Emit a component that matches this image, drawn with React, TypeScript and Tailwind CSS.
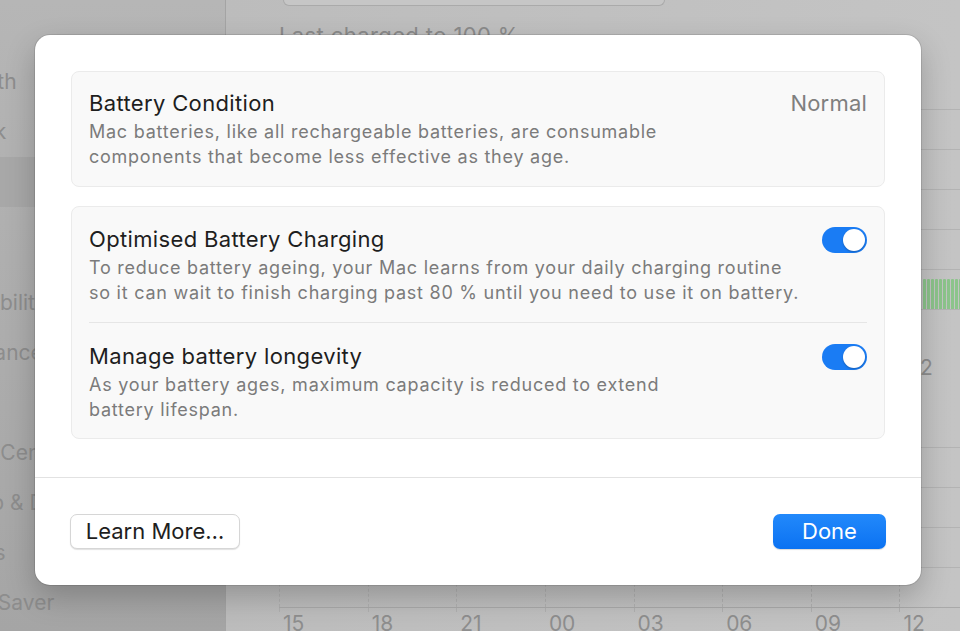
const sidebarItems = [
  { label: "Bluetooth", h: 50 },
  { label: "Network", h: 50 },
  { label: "Battery", h: 50, selected: true },
  { label: "", h: 21 },
  { label: "General", h: 50 },
  { label: "Accessibility", h: 50 },
  { label: "Appearance", h: 50 },
  { label: "Siri", h: 50 },
  { label: "Control Centre", h: 50 },
  { label: "Desktop & Dock", h: 50 },
  { label: "Displays", h: 50 },
  { label: "Screen Saver", h: 50 },
];

const hours = ["15", "18", "21", "00", "03", "06", "09", "12"];

function Toggle() {
  return (
    <div className="flex h-[26px] w-[45px] shrink-0 items-center justify-end rounded-full bg-[#1a7cf4] p-[2px]">
      <div className="h-[22px] w-[22px] rounded-full bg-white shadow-[0_1px_2px_rgba(0,0,0,0.25)]" />
    </div>
  );
}

function ChartGrid({ rows, bars }: { rows: number; bars?: boolean }) {
  return (
    <div className="relative flex w-[709px] flex-col">
      {Array.from({ length: rows }).map((_, i) => (
        <div key={i} className="h-[40px] border-t border-[#b3b3b3]" />
      ))}
      <div className="absolute inset-0 grid grid-cols-8">
        {hours.map((h, i) => (
          <div key={h} className="flex items-end border-l border-dashed border-[#b0b0b0]">
            {bars && i === 7 && (
              <div className="ml-[23px] flex h-[30px] items-end gap-[1px]">
                {Array.from({ length: 12 }).map((_, j) => (
                  <div key={j} className="h-[30px] w-[3px] rounded-t-[1px] bg-[#8cc48b]" />
                ))}
              </div>
            )}
          </div>
        ))}
      </div>
    </div>
  );
}

function HourLabels({ shift }: { shift?: boolean }) {
  return (
    <div className="grid w-[709px] grid-cols-8 text-[21px] leading-[26px] text-[#8e8e8e]">
      {hours.map((h) => (
        <div key={h} className={shift ? "pl-[12px]" : "pl-[4px]"}>
          {h}
        </div>
      ))}
    </div>
  );
}

export default function App() {
  return (
    <div className="relative h-[631px] w-[960px] overflow-hidden bg-[#bdbdbd] font-['Inter','Noto_Sans',sans-serif]">
      {/* dimmed window behind the sheet */}
      <div className="flex h-full">
        <aside className="w-[226px] shrink-0 overflow-hidden border-r border-[#a4a4a4] bg-gradient-to-b from-[#b6b6b6] to-[#a5a5a5] pt-[57px]">
          {sidebarItems.map((item, i) => (
            <div
              key={i}
              style={{ height: item.h }}
              className={`flex items-center rounded-r-[8px] ${item.selected ? "mr-[10px] bg-[#a8a8a8]" : ""}`}
            >
              <span className="ml-[-78px] whitespace-nowrap text-[21px] text-[#8d8d8d]">{item.label}</span>
            </div>
          ))}
        </aside>

        <main className="flex-1 overflow-hidden bg-gradient-to-r from-[#bcbcbc] to-[#c4c4c4] pl-[53px]">
          <div className="ml-[4px] h-[6px] w-[382px] rounded-b-[8px] border border-t-0 border-[#aaaaaa] bg-[#c6c6c6]" />
          <p className="mt-[15px] text-[22px] leading-[28px] tracking-[0.4px] text-[#8a8a8a]">Last charged to 100 %</p>
          <div className="mt-[60px]">
            <ChartGrid rows={5} bars />
          </div>
          <div className="w-[709px] border-t border-[#b3b3b3]" />
          <div className="mt-[45px]">
            <HourLabels shift />
          </div>
          <div className="mt-[66px]">
            <ChartGrid rows={4} />
          </div>
          <div className="h-[4px] w-[709px] border-t border-[#a9a9a9]">
            <div className="grid h-[4px] grid-cols-8">
              {hours.map((h) => (
                <div key={h} className="border-l border-dashed border-[#b0b0b0]" />
              ))}
            </div>
          </div>
          <HourLabels />
        </main>
      </div>

      {/* sheet */}
      <div className="absolute left-[35px] top-[35px] flex h-[550px] w-[886px] flex-col rounded-[15px] bg-white shadow-[0_0_0_1px_rgba(0,0,0,0.1),0_12px_30px_rgba(0,0,0,0.22)]">
        <div className="flex flex-col gap-[19px] px-[36px] pt-[36px]">
          <section className="flex rounded-[8px] border border-[#ebebeb] bg-[#f9f9f9] px-[17px] pb-[17px] pt-[19px]">
            <div className="flex-1">
              <h2 className="text-[22px] leading-[24px] tracking-[0.35px] text-[#1e1e1e]">Battery Condition</h2>
              <p className="mt-[4px] text-[18px] leading-[25px] tracking-[0.75px] text-[#7b7b7b]">
                Mac batteries, like all rechargeable batteries, are consumable
                <br />
                components that become less effective as they age.
              </p>
            </div>
            <span className="text-[22px] leading-[24px] tracking-[0.2px] text-[#7f7f7f]">Normal</span>
          </section>

          <section className="rounded-[8px] border border-[#ebebeb] bg-[#f9f9f9] px-[17px]">
            <div className="flex gap-[16px] border-b border-[#e6e6e6] pb-[17px] pt-[20px]">
              <div className="flex-1">
                <h2 className="text-[22px] leading-[24px] tracking-[0.35px] text-[#1e1e1e]">Optimised Battery Charging</h2>
                <p className="mt-[4px] whitespace-nowrap text-[18px] leading-[25px] tracking-[0.75px] text-[#7b7b7b]">
                  To reduce battery ageing, your Mac learns from your daily charging routine
                  <br />
                  so it can wait to finish charging past 80 % until you need to use it on battery.
                </p>
              </div>
              <Toggle />
            </div>
            <div className="flex gap-[16px] pb-[16px] pt-[21px]">
              <div className="flex-1">
                <h2 className="text-[22px] leading-[24px] tracking-[0.35px] text-[#1e1e1e]">Manage battery longevity</h2>
                <p className="mt-[4px] text-[18px] leading-[25px] tracking-[0.75px] text-[#7b7b7b]">
                  As your battery ages, maximum capacity is reduced to extend
                  <br />
                  battery lifespan.
                </p>
              </div>
              <Toggle />
            </div>
          </section>
        </div>

        <div className="mt-auto flex h-[108px] items-center justify-between border-t border-[#e2e2e2] px-[35px]">
          <button className="h-[35px] w-[170px] rounded-[7px] border border-[#d6d6d6] bg-white text-[22px] text-[#1e1e1e] shadow-[0_1px_1px_rgba(0,0,0,0.12)]">
            Learn More…
          </button>
          <button className="h-[35px] w-[113px] rounded-[7px] bg-gradient-to-b from-[#2289fb] to-[#0a72f2] text-[22px] text-white shadow-[0_1px_1px_rgba(0,0,0,0.15)]">
            Done
          </button>
        </div>
      </div>
    </div>
  );
}
